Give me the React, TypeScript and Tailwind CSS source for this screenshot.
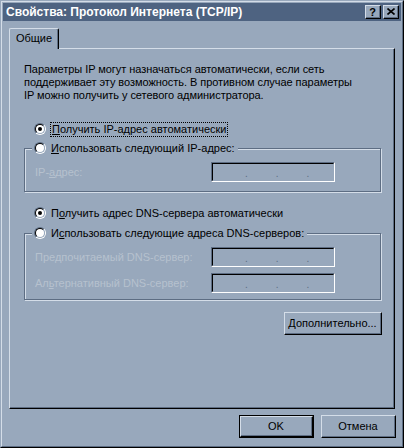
import React from "react";

const FACE = "bg-[#98a8bc]";

function Radio({ checked }: { checked?: boolean }) {
  return (
    <div className="w-[12px] h-[12px] rounded-full border border-t-[#5d6d83] border-l-[#5d6d83] border-b-[#ffffff] border-r-[#ffffff] shrink-0">
      <div className="w-full h-full rounded-full border border-t-[#000000] border-l-[#000000] border-b-[#98a8bc] border-r-[#98a8bc] bg-white flex items-center justify-center">
        {checked && <div className="w-[4px] h-[4px] rounded-full bg-black" />}
      </div>
    </div>
  );
}

function IpBox() {
  return (
    <div className="w-[124px] h-[20px] border border-t-[#5d6d83] border-l-[#5d6d83] border-b-[#ffffff] border-r-[#ffffff]">
      <div className="w-full h-full border border-t-black border-l-black border-b-[#98a8bc] border-r-[#98a8bc] flex items-end pb-[3px]">
        <div className="w-[32px]" />
        <span className="text-[#5d6d83] text-[10px] leading-[6px]">.</span>
        <div className="w-[28px]" />
        <span className="text-[#5d6d83] text-[10px] leading-[6px]">.</span>
        <div className="w-[28px]" />
        <span className="text-[#5d6d83] text-[10px] leading-[6px]">.</span>
      </div>
    </div>
  );
}

function Btn({ children, def, w }: { children: React.ReactNode; def?: boolean; w: string }) {
  if (def) {
    return (
      <div className={`${w} h-[23px] border border-black`}>
        <div className="w-full h-full border border-t-[#d4dde8] border-l-[#d4dde8] border-b-black border-r-black">
          <div className="w-full h-full border-b border-r border-[#5d6d83] flex items-center justify-center text-black">
            {children}
          </div>
        </div>
      </div>
    );
  }
  return (
    <div className={`${w} h-[23px] border border-t-[#d4dde8] border-l-[#d4dde8] border-b-black border-r-black`}>
      <div className="w-full h-full border-b border-r border-[#5d6d83] flex items-center justify-center text-black">
        {children}
      </div>
    </div>
  );
}

function TitleBtn({ children }: { children: React.ReactNode }) {
  return (
    <div className="w-[16px] h-[14px] bg-[#98a8bc] border border-t-[#d4dde8] border-l-[#d4dde8] border-b-black border-r-black">
      <div className="w-full h-full border-b border-r border-[#5d6d83] flex items-center justify-center">
        {children}
      </div>
    </div>
  );
}

export default function App() {
  const disabled = "text-[#b6c1ce]";
  return (
    <div
      className={`w-[404px] h-[448px] ${FACE} border border-t-[#98a8bc] border-l-[#98a8bc] border-b-black border-r-black text-[11px] leading-[13px] text-black`}
      style={{ fontFamily: '"Liberation Sans", Arial, sans-serif' }}
    >
      <div className="w-full h-full border border-t-[#d4dde8] border-l-[#d4dde8] border-b-[#5d6d83] border-r-[#5d6d83] p-px flex flex-col">
        {/* Title bar */}
        <div className="h-[18px] bg-[#4e6381] flex items-center pl-[3px] pr-[2px]">
          <span className="text-white font-bold text-[12px] leading-[18px] flex-1">
            Свойства: Протокол Интернета (TCP/IP)
          </span>
          <div className="flex gap-[2px]">
            <TitleBtn>
              <span className="font-bold text-[11px] leading-[10px] text-black">?</span>
            </TitleBtn>
            <TitleBtn>
              <svg width="8" height="7" viewBox="0 0 8 7">
                <path d="M0.5 0.5 L7.5 6.5 M7.5 0.5 L0.5 6.5" stroke="black" strokeWidth="1.6" />
              </svg>
            </TitleBtn>
          </div>
        </div>

        {/* Tabs + panel */}
        <div className="pl-[6px] pt-[7px] flex flex-col">
          <div className="flex">
            <div className="relative z-10 w-[50px] h-[21px] -mb-[1px] bg-[#98a8bc] border-t border-l border-[#d4dde8] rounded-tl-[2px] rounded-tr-[2px] border-r border-r-black shadow-[inset_-1px_0_0_#5d6d83] flex items-center justify-center pb-[1px]">
              Общие
            </div>
          </div>
          <div className="w-[386px] h-[361px] border-t border-l border-[#d4dde8] border-r border-b border-r-black border-b-black shadow-[inset_-1px_-1px_0_#5d6d83] pl-[14px] pr-[12px] pt-[14px] flex flex-col">
            <p className="whitespace-nowrap tracking-[-0.05px]">
              Параметры IP могут назначаться автоматически, если сеть
              <br />
              поддерживает эту возможность. В противном случае параметры
              <br />
              IP можно получить у сетевого администратора.
            </p>

            {/* radio 1 */}
            <div className="mt-[19px] ml-[10px] h-[16px] flex items-center">
              <Radio checked />
              <span className="ml-[4px] px-[1px] h-[15px] border border-dotted border-black leading-[13px]">
                <u>П</u>олучить IP-адрес автоматически
              </span>
            </div>

            {/* group 1 */}
            <div className="mt-[11px] mr-px h-[44px] border border-[#5d6d83] shadow-[inset_1px_1px_0_#d4dde8,1px_1px_0_#d4dde8] flex flex-col">
              <div className="-mt-[9px] ml-[7px] self-start h-[16px] bg-[#98a8bc] pl-[2px] pr-[3px] flex items-center">
                <Radio />
                <span className="ml-[5px]">
                  <u>И</u>спользовать следующий IP-адрес:
                </span>
              </div>
              <div className="mt-[6px] pl-[10px] flex items-center">
                <span className={`${disabled} w-[176px]`}>
                  IP-<u>а</u>дрес:
                </span>
                <IpBox />
              </div>
            </div>

            {/* radio 3 */}
            <div className="mt-[13px] ml-[10px] h-[16px] flex items-center">
              <Radio checked />
              <span className="ml-[5px]">
                П<u>о</u>лучить адрес DNS-сервера автоматически
              </span>
            </div>

            {/* group 2 */}
            <div className="mt-[12px] mr-px h-[67px] border border-[#5d6d83] shadow-[inset_1px_1px_0_#d4dde8,1px_1px_0_#d4dde8] flex flex-col">
              <div className="-mt-[9px] ml-[7px] self-start h-[16px] bg-[#98a8bc] pl-[2px] pr-[3px] flex items-center">
                <Radio />
                <span className="ml-[5px]">
                  И<u>с</u>пользовать следующие адреса DNS-серверов:
                </span>
              </div>
              <div className="mt-[6px] pl-[10px] flex items-center">
                <span className={`${disabled} w-[176px]`}>
                  Пре<u>д</u>почитаемый DNS-сервер:
                </span>
                <IpBox />
              </div>
              <div className="mt-[6px] pl-[10px] flex items-center">
                <span className={`${disabled} w-[176px]`}>
                  Ал<u>ь</u>тернативный DNS-сервер:
                </span>
                <IpBox />
              </div>
            </div>

            <div className="mt-[12px] self-end">
              <Btn w="w-[98px]">
                <span>
                  <u>Д</u>ополнительно...
                </span>
              </Btn>
            </div>
          </div>
        </div>

        {/* bottom buttons */}
        <div className="mt-[6px] flex justify-end gap-[7px] pr-[5px]">
          <Btn def w="w-[75px]">OK</Btn>
          <Btn w="w-[75px]">Отмена</Btn>
        </div>
      </div>
    </div>
  );
}
